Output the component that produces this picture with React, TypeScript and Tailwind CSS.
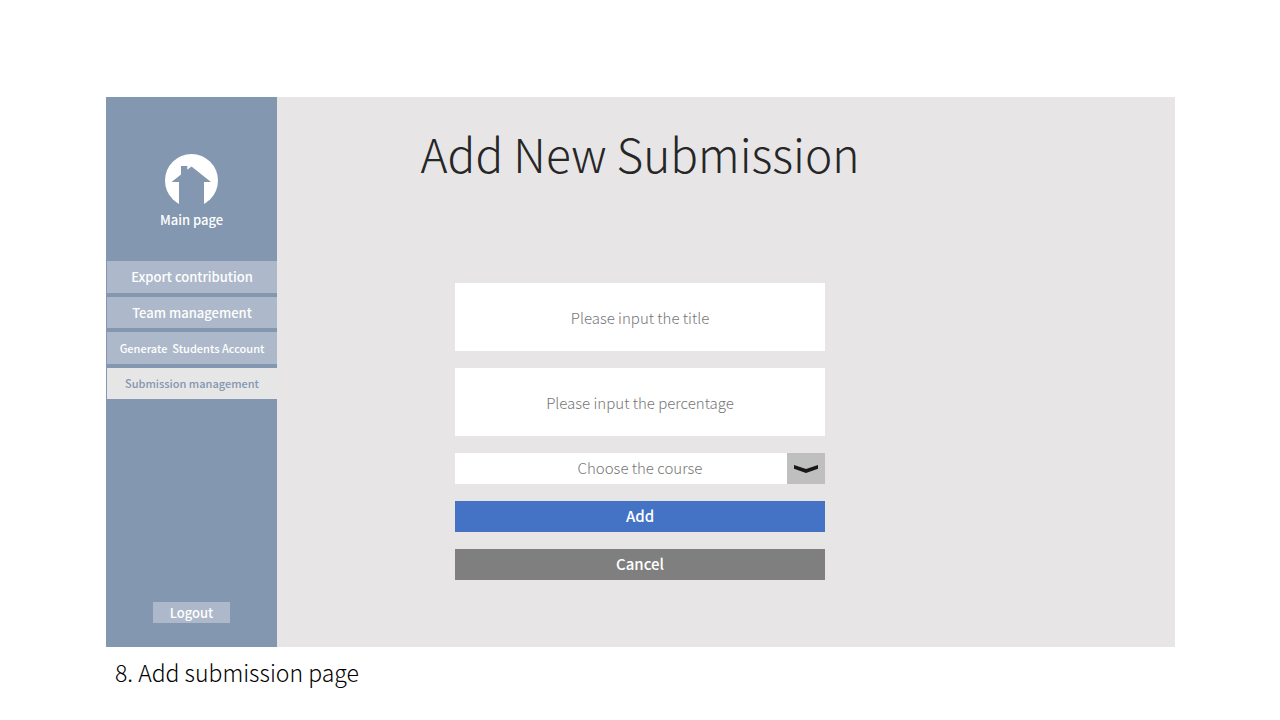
import type { FormEvent } from "react";

const navItems = [
  { label: "Export contribution", size: "text-[13px]" },
  { label: "Team management", size: "text-[13px]" },
  { label: "Generate\u00a0 Students Account", size: "text-[11px]" },
];

function HouseIcon() {
  return (
    <svg viewBox="0 0 53 53" className="h-[53px] w-[53px]" aria-hidden="true">
      <circle cx="26.5" cy="26.5" r="26.5" fill="#fff" />
      <path
        d="M6.5 28 L16 20.4 V12 H22.3 V15.8 L26.5 12.6 L46 28 H39 V53 H14 V28 Z"
        fill="#8497b0"
      />
    </svg>
  );
}

function Sidebar() {
  return (
    <aside className="flex w-[171px] shrink-0 flex-col bg-[#8497b0] pt-[57px] pb-6 font-medium text-white">
      <a href="#main" className="flex flex-col items-center gap-[3px] text-[13px] leading-5">
        <HouseIcon />
        Main page
      </a>
      <nav className="mt-[31px] grid h-[138px] auto-rows-fr gap-1 pl-px">
        {navItems.map((item) => (
          <a
            key={item.label}
            href="#section"
            className={`flex items-center justify-center whitespace-nowrap bg-[#adb9ca] ${item.size}`}
          >
            {item.label}
          </a>
        ))}
        <a
          href="#submissions"
          aria-current="page"
          className="flex items-center justify-center whitespace-nowrap bg-[#e7e6e6] text-[11px] text-[#8497b0]"
        >
          Submission management
        </a>
      </nav>
      <button
        type="button"
        className="mx-auto mt-auto h-[21px] w-[77px] bg-[#adb9ca] text-[13px] leading-5"
      >
        Logout
      </button>
    </aside>
  );
}

function SubmissionForm() {
  const field =
    "h-[68px] w-full bg-white text-center text-[15px] font-light text-[#767676] placeholder:text-[#767676] placeholder:opacity-100";
  return (
    <form
      onSubmit={(e: FormEvent) => e.preventDefault()}
      className="mt-[100px] flex w-full max-w-[370px] flex-col gap-[17px]"
    >
      <input type="text" aria-label="Title" placeholder="Please input the title" className={field} />
      <input
        type="text"
        aria-label="Percentage"
        placeholder="Please input the percentage"
        className={field}
      />
      <div className="relative">
        <select
          aria-label="Course"
          defaultValue=""
          className="block h-[31px] w-full appearance-none bg-white text-center text-[15px] font-light text-[#767676] [text-align-last:center]"
        >
          <option value="">Choose the course</option>
        </select>
        <span className="pointer-events-none absolute inset-y-0 right-0 flex w-[38px] items-center justify-center bg-[#bfbfbf]">
          <svg viewBox="0 0 24 8" className="h-2 w-6" aria-hidden="true">
            <path d="M0 0 L12 4 L24 0 V3.8 L12 8 L0 3.8 Z" fill="#171717" />
          </svg>
        </span>
      </div>
      <button type="submit" className="h-[31px] bg-[#4472c4] text-[15px] font-medium text-white">
        Add
      </button>
      <button type="button" className="h-[31px] bg-[#7f7f7f] text-[15px] font-medium text-white">
        Cancel
      </button>
    </form>
  );
}

export default function App() {
  return (
    <div className="min-h-screen bg-white px-[106px] pt-[97px] pb-6 font-['Noto_Sans_CJK_SC','Noto_Sans',sans-serif]">
      <div className="-mr-px flex min-h-[550px]">
        <Sidebar />
        <main className="flex flex-1 flex-col items-center bg-[#e7e5e6] pt-[26px] pr-[172px]">
          <h1 className="text-[46px] leading-[60px] font-light whitespace-nowrap text-[#262626]">
            Add New Submission
          </h1>
          <SubmissionForm />
        </main>
      </div>
      <p className="mt-[7px] pl-[9px] text-[23px] leading-9 font-light text-black">
        8. Add submission page
      </p>
    </div>
  );
}
